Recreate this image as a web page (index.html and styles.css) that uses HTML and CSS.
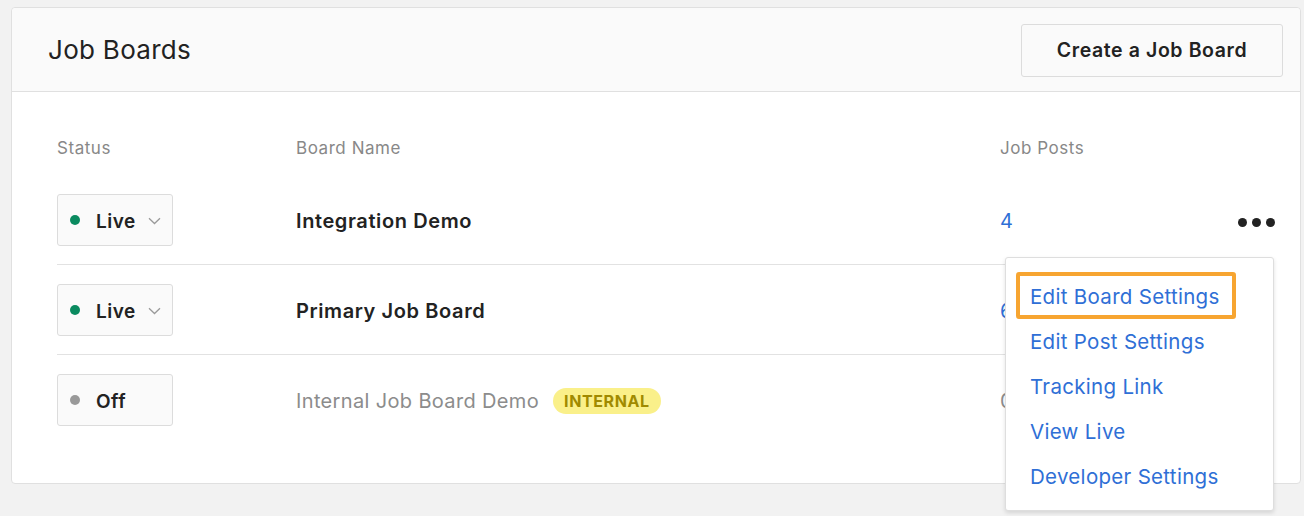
FILE: index.html
```html
<!DOCTYPE html>
<html>
<head>
<meta charset="utf-8">
<link rel="stylesheet" href="styles.css">
</head>
<body>
<div class="card">
  <div class="card-head">
    <h1 class="title">Job Boards</h1>
    <button class="btn">Create a Job Board</button>
  </div>
  <div class="card-body">
    <div class="thead">
      <div class="c-status">Status</div>
      <div class="c-name">Board Name</div>
      <div class="c-posts">Job Posts</div>
      <div class="c-more"></div>
    </div>
    <div class="row">
      <div class="c-status">
        <div class="status"><span class="dot live"></span><span class="st-label">Live</span>
          <svg class="chev" width="13" height="8" viewBox="0 0 13 8"><path d="M1 1.2 L6.5 6.5 L12 1.2" fill="none" stroke="#9a9a9a" stroke-width="1.3"/></svg>
        </div>
      </div>
      <div class="c-name strong">Integration Demo</div>
      <div class="c-posts link">4</div>
      <div class="c-more">
        <div class="dots"><span></span><span></span><span></span></div>
        <div class="menu">
          <div class="item hl">Edit Board Settings</div>
          <div class="item">Edit Post Settings</div>
          <div class="item">Tracking Link</div>
          <div class="item">View Live</div>
          <div class="item">Developer Settings</div>
        </div>
      </div>
    </div>
    <div class="row">
      <div class="c-status">
        <div class="status"><span class="dot live"></span><span class="st-label">Live</span>
          <svg class="chev" width="13" height="8" viewBox="0 0 13 8"><path d="M1 1.2 L6.5 6.5 L12 1.2" fill="none" stroke="#9a9a9a" stroke-width="1.3"/></svg>
        </div>
      </div>
      <div class="c-name strong">Primary Job Board</div>
      <div class="c-posts link">6</div>
      <div class="c-more"></div>
    </div>
    <div class="row last">
      <div class="c-status">
        <div class="status"><span class="dot off"></span><span class="st-label">Off</span></div>
      </div>
      <div class="c-name muted">Internal Job Board Demo <span class="badge">INTERNAL</span></div>
      <div class="c-posts muted">0</div>
      <div class="c-more"></div>
    </div>
  </div>
</div>
</body>
</html>
```

FILE: styles.css
```css
*, *::before, *::after { box-sizing: border-box; }
html, body { margin: 0; padding: 0; }
body {
  background: #f2f2f2;
  font-family: Inter, "Noto Sans", "Liberation Sans", sans-serif;
  color: #222;
  height: 516px;
  overflow: hidden;
}
.card {
  margin: 7px 3px 0 11px;
  background: #fff;
  border: 1px solid #e0e0e0;
  border-radius: 4px;
}
.card-head {
  height: 84px;
  background: #fafafa;
  border-bottom: 1px solid #e0e0e0;
  border-radius: 4px 4px 0 0;
  display: flex;
  align-items: center;
  justify-content: space-between;
  padding: 0 17px 0 36px;
}
.title {
  margin: 0;
  font-size: 26px;
  font-weight: 400;
  letter-spacing: 0.3px;
  color: #222;
}
.btn {
  font-family: inherit;
  height: 53px;
  width: 262px;
  background: #fafafa;
  border: 1px solid #dcdcdc;
  border-radius: 3px;
  font-size: 19.5px;
  font-weight: 600;
  letter-spacing: 0.6px;
  color: #222;
  margin-top: 1px;
}
.card-body {
  padding: 45px 26px 39px 45px;
}
.thead, .row {
  display: flex;
  align-items: center;
}
.thead {
  height: 20px;
  margin-bottom: 18px;
  color: #888;
}
.thead > div {
  font-size: 17px;
  letter-spacing: 0.55px;
  font-weight: 400;
  padding-top: 1px;
}
.row {
  height: 90px;
  border-bottom: 1px solid #e2e2e2;
}
.row.last { border-bottom: none; height: 89px; }
.c-status { width: 239px; flex: none; }
.c-name { flex: 1; font-size: 20px; display: flex; align-items: center; }
.c-posts { width: 200px; flex: none; font-size: 20px; padding-left: 1px; }
.row .c-name, .row .c-posts { padding-top: 3px; }
.c-more { width: 75px; flex: none; position: relative; display: flex; justify-content: flex-end; }
.strong { font-weight: 600; color: #222; letter-spacing: 0.6px; }
.muted { color: #8c8c8c; letter-spacing: 0.35px; }
.link { color: #2f6fd6; }
.status {
  width: 116px;
  height: 52px;
  background: #fafafa;
  border: 1px solid #dcdcdc;
  border-radius: 3px;
  display: flex;
  align-items: center;
  padding-left: 12px;
}
.dot {
  width: 10px;
  height: 10px;
  border-radius: 50%;
  flex: none;
}
.dot.live { background: #0a8a5f; }
.dot.off { background: #999; }
.st-label {
  margin-left: 16px;
  padding-top: 3px;
  font-size: 19px;
  font-weight: 600;
  letter-spacing: 0.5px;
  color: #222;
}
.chev { margin-left: 12px; margin-top: 2px; }
.badge {
  display: inline-flex;
  align-items: center;
  height: 26px;
  margin-left: 14px;
  padding: 0 11px;
  border-radius: 13px;
  background: #faf08a;
  color: #a08a00;
  font-size: 16px;
  font-weight: 700;
  letter-spacing: 0.6px;
}
.dots {
  display: flex;
  gap: 5px;
  margin-top: 5px;
  margin-right: -1px;
}
.dots span {
  width: 9px;
  height: 9px;
  border-radius: 50%;
  background: #222;
}
.menu {
  position: absolute;
  top: 44px;
  right: 0;
  width: 269px;
  background: #fff;
  border: 1px solid #dedede;
  border-radius: 3px;
  box-shadow: 0 2px 4px rgba(0,0,0,0.12);
  padding: 15px 0 12px;
  z-index: 5;
}
.item {
  height: 45px;
  display: flex;
  align-items: center;
  padding-left: 24px;
  padding-top: 2px;
  font-size: 20.5px;
  letter-spacing: 0.3px;
  color: #2f6fd6;
  position: relative;
  white-space: nowrap;
}
.item.hl::after {
  content: "";
  position: absolute;
  left: 10px;
  top: -1px;
  width: 220px;
  height: 47px;
  border: 4px solid #f7a531;
  border-radius: 3px;
}
```
